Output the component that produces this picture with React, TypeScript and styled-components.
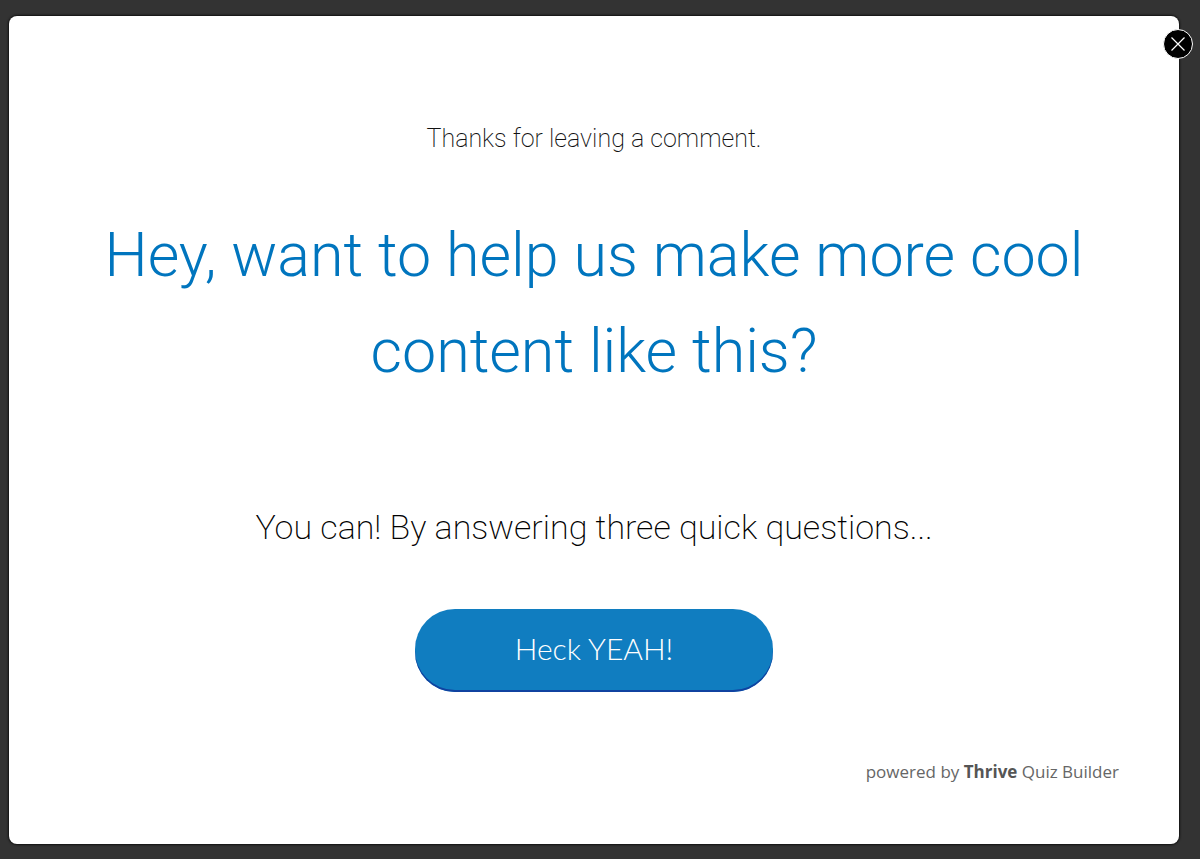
import React from "react";
import styled, { createGlobalStyle } from "styled-components";

const GlobalStyle = createGlobalStyle`
  *, *::before, *::after { box-sizing: border-box; }
  body { margin: 0; background: #333333; }
`;

const Backdrop = styled.div`
  min-height: 100vh;
  display: flex;
  padding: 16px 21px 15px 9px;
  background: #333333;
`;

const Dialog = styled.main`
  position: relative;
  flex: 1;
  display: flex;
  flex-direction: column;
  align-items: center;
  padding: 101px 60px 60px;
  background: #ffffff;
  border-radius: 8px;
  box-shadow: 0 0 2px 1px #111111;
  font-family: Roboto, sans-serif;
  font-weight: 300;
  text-align: center;
`;

const CloseButton = styled.button`
  position: absolute;
  top: 13px;
  right: -14px;
  width: 30px;
  height: 30px;
  display: grid;
  place-items: center;
  padding: 0;
  border: 1px solid #ffffff;
  border-radius: 50%;
  background: #000000;
  cursor: pointer;
`;

const Lead = styled.p`
  margin: 0;
  font-size: 25px;
  font-weight: 200;
  line-height: 44px;
  color: #111111;
`;

const Title = styled.h1`
  margin: 46px 0 0;
  font-size: 61px;
  font-weight: 300;
  line-height: 96px;
  color: #0075be;
`;

const Invite = styled.p`
  margin: 100px 0 0;
  font-size: 34px;
  font-weight: 200;
  line-height: 56px;
  color: #000000;
`;

const StartButton = styled.button`
  width: 358px;
  max-width: 100%;
  height: 83px;
  margin-top: 54px;
  padding: 0 0 6px;
  border: 0;
  border-radius: 40px;
  background: #107dc0;
  box-shadow: inset 0 -2px 0 #1042a0;
  color: #ffffff;
  font-family: Lato, sans-serif;
  font-size: 30px;
  font-weight: 300;
  cursor: pointer;
`;

const Credit = styled.footer`
  align-self: flex-end;
  margin-top: auto;
  font-family: "Open Sans", sans-serif;
  font-size: 17px;
  font-weight: 400;
  line-height: 24px;
  color: #666666;
`;

const Brand = styled.strong`
  font-weight: 700;
  color: #555555;
`;

export default function App() {
  return (
    <>
      <GlobalStyle />
      <Backdrop>
        <Dialog role="dialog" aria-labelledby="invite-title">
          <CloseButton type="button" aria-label="Close">
            <svg width="14" height="14" viewBox="0 0 14 14" fill="none" stroke="#ffffff" strokeWidth="1.2">
              <path d="M.5.5L13.5 13.5M13.5.5L.5 13.5" />
            </svg>
          </CloseButton>
          <Lead>Thanks for leaving a comment.</Lead>
          <Title id="invite-title">Hey, want to help us make more cool content like this?</Title>
          <Invite>You can! By answering three quick questions...</Invite>
          <StartButton type="button">Heck YEAH!</StartButton>
          <Credit>
            powered by <Brand>Thrive</Brand> Quiz Builder
          </Credit>
        </Dialog>
      </Backdrop>
    </>
  );
}
